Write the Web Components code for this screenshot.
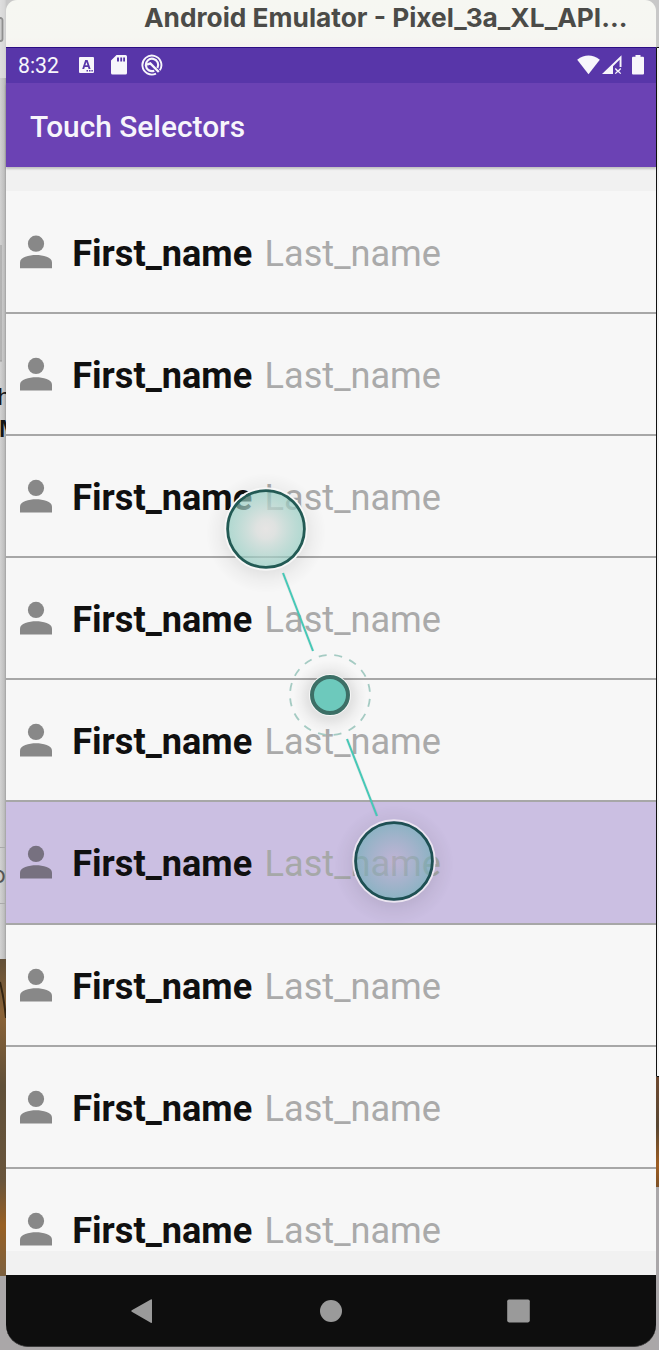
<!DOCTYPE html>
<html lang="en"><head><meta charset="utf-8"><title>Touch Selectors</title>
<style>html,body{margin:0;width:659px;height:1350px;overflow:hidden;background:#b6b3b3}</style></head>
<body><touch-app></touch-app>
<script>
const define=(name,html)=>{
  const t=document.createElement('template');t.innerHTML=html;
  customElements.define(name,class extends HTMLElement{
    constructor(){super();this.attachShadow({mode:'open'}).append(t.content.cloneNode(true));}
  });
};

define('window-title',`<style>
:host{display:block;height:47px;background:linear-gradient(#f6f7f2,#f6f6f2 80%,#f5f1ef);border-radius:11px 11px 0 0;overflow:hidden;box-sizing:border-box;padding-left:138px}
svg{display:block}text{font:bold 26px Inter,sans-serif;fill:#4b4b48}
</style><svg width="511" height="47"><text x="0" y="27" textLength="483.5" lengthAdjust="spacingAndGlyphs">Android Emulator - Pixel_3a_XL_API...</text></svg>`);

define('status-bar',`<style>
:host{display:flex;box-sizing:border-box;height:36px;background:#5836a9;border-top:1px solid #2c0d83;align-items:center;padding:0 12px 1px 12px}
svg{display:block;fill:#f7f6fb;flex:none}.time{width:41px;height:34px}.time text{font:21.5px Roboto,sans-serif}
.a{margin-left:20px}.s{margin-left:17px}.q{margin-left:14px}.w{margin-left:auto}.c{margin-left:2px}.b{margin-left:10px}
</style>
<svg class="time"><text x="0" y="25" textLength="41" lengthAdjust="spacingAndGlyphs">8:32</text></svg>
<svg class="a" width="15" height="16" viewBox="0 0 15 16"><path fill-rule="evenodd" d="M1 0H14Q15 0 15 1V15Q15 16 14 16H1Q0 16 0 15V1Q0 0 1 0M6.2 3 3.2 12H5.2l.6-2h3.2l.6 2h2L8.6 3ZM6.3 8.3 7.4 5l1.1 3.3ZM7.5 13v1.6H9V13ZM10 13v1.6h1.5V13ZM12.4 13v1.6h1.4V13Z"/></svg>
<svg class="s" width="16" height="20" viewBox="0 0 16 20"><path fill-rule="evenodd" d="M5.5 0H14.5Q16 0 16 1.5V18Q16 19.5 14.5 19.5H1.5Q0 19.5 0 18V5.5ZM6 2.5V6.5H8V2.5ZM9.3 2.5V6.5h1.8V2.5ZM12.2 2.5V6.5H14V2.5Z"/></svg>
<svg class="q" width="22" height="22" viewBox="0 0 22 22" style="fill:none;stroke:#f7f6fb"><path d="M15 19.6A9.5 9.5 0 1 1 18.8 16.3" stroke-width="1.9"/><path d="M13.3 16.7A6.2 6.2 0 1 1 16.4 14" stroke-width="2.2"/><path d="M6 10.6 9.3 9.4 17.8 18" stroke-width="2.4"/></svg>
<svg class="w" width="23" height="20" viewBox="0 0 23 20"><path d="M11.5 19.2.2 4.7Q11.5-3.6 22.8 4.7Z"/></svg>
<svg class="c" width="20" height="20" viewBox="0 0 20 20"><path fill-rule="evenodd" d="M0 19 19.5.3V12H17.6V4.7L11 11.3V19ZM13.7 13.1l2.3 2.1 2.3-2.1.9 1-2.1 2.1 2.1 2-.9.9-2.3-2-2.3 2-.9-.9 2.1-2-2.1-2.1Z"/></svg>
<svg class="b" width="12" height="20" viewBox="0 0 12 20"><path d="M3.5 0H8.5V1.8H11Q12 1.8 12 3V18.5Q12 19.5 11 19.5H1Q0 19.5 0 18.5V3Q0 1.8 1 1.8H3.5Z"/></svg>`);

define('app-bar',`<style>
:host{display:block;height:84px;background:#6b42b4;box-shadow:0 2px 2px #0003;position:relative}
svg{display:block}text{font:500 30px Roboto,sans-serif;fill:#f7f5fb}
</style><svg width="300" height="84"><text x="24" y="54" textLength="215" lengthAdjust="spacingAndGlyphs">Touch Selectors</text></svg>`);

define('name-row',`<style>
:host{display:flex;height:122.15px;box-sizing:border-box;border-bottom:2px solid #a7a7a7;background:#f7f7f7;padding-left:14px;--ic:#888;--l:#aaa}
:host([selected]){background:#cbbfe2;--ic:#777180;--l:#a6a8a8}
:host([first]){height:122.8px}
:host([last]){height:82px;border:0}
:host([last]) svg{height:81px}
svg{display:block;height:120px}
.p{fill:var(--ic)}.f{font:bold 36.3px Roboto,sans-serif;fill:#101010}.l{font:36.3px Roboto,sans-serif;fill:var(--l)}
:host(:not([first])) .all{transform:translateY(-.8px)}
</style><svg width="450" height="120"><g class="all"><g class="p"><circle cx="16" cy="52.7" r="8.1"/><path d="M0 77.2V71.2C0 66.2 9 64 16 64S32 66.2 32 71.2V77.2Z"/></g><text class="f" x="52.2" y="75" textLength="180" lengthAdjust="spacingAndGlyphs">First_name</text><text class="l" x="244.5" y="75" textLength="176.5" lengthAdjust="spacingAndGlyphs">Last_name</text></g></svg>`);

define('nav-bar',`<style>
:host{display:block;height:72px;box-sizing:border-box;background:#0e0e0e;border-radius:0 0 22px 22px;border-bottom:1px solid #3b3b3b}
svg{width:100%;height:71px;display:block}
</style><svg viewBox="0 0 650 71" fill="#9a9a9a"><path d="M126.2 35.1 144.8 24.4Q146 23.8 146 25V47Q146 48.4 144.8 47.7L126.2 37Q124.3 36 126.2 35.1Z"/><circle cx="325" cy="36" r="11"/><rect x="501.2" y="24.4" width="22.6" height="23" rx="1.8"/></svg>`);

define('touch-points',`<style>
:host{position:absolute;left:0;top:0;pointer-events:none}svg{display:block}
</style><svg width="659" height="1350" fill="none">
<defs><radialGradient id="a"><stop stop-color="#e3e1e0" stop-opacity=".85"/><stop offset=".25" stop-color="#d9dddb" stop-opacity=".8"/><stop offset="1" stop-color="#8cc9bd" stop-opacity=".66"/></radialGradient>
<radialGradient id="b"><stop stop-color="#b3a9c8" stop-opacity=".5"/><stop offset="1" stop-color="#6aacb3" stop-opacity=".66"/></radialGradient>
<radialGradient id="s"><stop stop-opacity=".11"/><stop offset=".6" stop-opacity=".08"/><stop offset=".8" stop-opacity=".03"/><stop offset="1" stop-opacity="0"/></radialGradient>
<mask id="m"><path fill="#fff" d="M0 0H659V1350H0Z"/><circle cx="266" cy="529" r="40" fill="#000"/><circle cx="394" cy="861" r="40" fill="#000"/></mask></defs>
<g mask="url(#m)"><circle cx="266" cy="533" r="60" fill="url(#s)"/><circle cx="394" cy="865" r="60" fill="url(#s)"/></g><circle cx="330" cy="697" r="37" fill="url(#s)"/>
<circle cx="266" cy="529" r="38.5" fill="url(#a)"/><circle cx="266" cy="529" r="40.7" stroke="#f7f7f7" stroke-width="2"/><circle cx="266" cy="529" r="38.4" stroke="#225a54" stroke-width="2.8"/>
<circle cx="394" cy="861" r="38.5" fill="url(#b)"/><circle cx="394" cy="861" r="40.7" stroke="#ebe5f1" stroke-width="2"/><circle cx="394" cy="861" r="38.4" stroke="#1e5053" stroke-width="2.8"/>
<path d="m283 573 30 78M347 739l30 77" stroke="#0001" stroke-width="3.2"/><path d="m283 573 30 78M347 739l30 77" stroke="#45c9b7" stroke-width="2"/>
<circle cx="330" cy="695" r="40" stroke="#a5cbc3" stroke-width="1.8" stroke-dasharray="8 7.708" stroke-dashoffset="-4"/>
<circle cx="330" cy="695" r="21" fill="#f7f7f7"/><circle cx="330" cy="695" r="18" fill="#6dc9bc" stroke="#3c6f66" stroke-width="4"/>
</svg>`);

define('desktop-left',`<style>
:host{display:block;width:6px;height:1350px;overflow:hidden}
svg{display:block}text{font:23px Inter,sans-serif;fill:#151515}
</style><svg width="6" height="1350"><defs><linearGradient id="g"><stop stop-color="#d2d2d2"/><stop offset=".7" stop-color="#bfbfbf"/><stop offset="1" stop-color="#a1a1a1"/></linearGradient><linearGradient id="w" x2="0" y2="1"><stop stop-color="#625038"/><stop offset=".17" stop-color="#8b6337"/><stop offset=".4" stop-color="#605039"/><stop offset=".7" stop-color="#69553c"/><stop offset=".84" stop-color="#986024"/><stop offset="1" stop-color="#7c603f"/></linearGradient></defs>
<path fill="url(#g)" d="M0 0H6V1350H0Z"/><path fill="#e5e5e5" opacity=".65" d="M0 0H6V78H0Z"/><rect x="-10" y="18" width="12.5" height="23" rx="2" fill="#ccc" stroke="#8f8f8f" stroke-width="1.8"/><path d="M1 245V361M0 361H2" stroke="#999"/>
<text x="-2.5" y="405">h</text><text x="-1" y="437" style="font-weight:600">M</text><path d="M0 847.5H6M0 903.5H6" stroke="#aaa"/><text x="-8" y="883" style="fill:#555">o</text>
<path fill="url(#w)" d="M0 959H6V1276H0Z"/><path d="M0 982Q4 998 6 1018" stroke="#211609" stroke-width="2" fill="none" opacity=".8"/><path d="M0 1276H6V1350H0Z" fill="#aaa7a8"/></svg>`);

define('desktop-right',`<style>:host{display:block;width:3px;height:1350px}svg{display:block}</style>
<svg width="3" height="1350"><defs><linearGradient id="w" x2="0" y2="1"><stop stop-color="#6e4931"/><stop offset=".45" stop-color="#584632"/><stop offset=".8" stop-color="#9e5d21"/><stop offset="1" stop-color="#7d5128"/></linearGradient></defs>
<path fill="#c8c8c8" d="M0 0H3V47H0Z"/><path fill="#f6f6f6" d="M0 47H3V1077H0Z"/><path d="M3 47.5H.5V1076.5H3" fill="none" stroke="#111"/><path fill="url(#w)" d="M0 1077H3V1187H0Z"/><path d="M0 1187H3V1350H0Z" fill="#aaa7a9"/></svg>`);

define('touch-app',`<style>
:host{display:flex;width:659px;height:1350px;position:relative}
.col{display:flex;flex-direction:column;width:650px;background:linear-gradient(#c8c8c8 1200px,#aaa7a8 1300px)}
.body{height:1108px;box-sizing:border-box;padding:24px 0;background:#f1f1f1}
</style><desktop-left></desktop-left><div class="col"><window-title></window-title><status-bar></status-bar><app-bar></app-bar>
<div class="body"><name-row first></name-row><name-row></name-row><name-row></name-row><name-row></name-row><name-row></name-row><name-row selected></name-row><name-row></name-row><name-row></name-row><name-row last></name-row></div>
<nav-bar></nav-bar></div><desktop-right></desktop-right><touch-points></touch-points>`);
</script></body></html>
